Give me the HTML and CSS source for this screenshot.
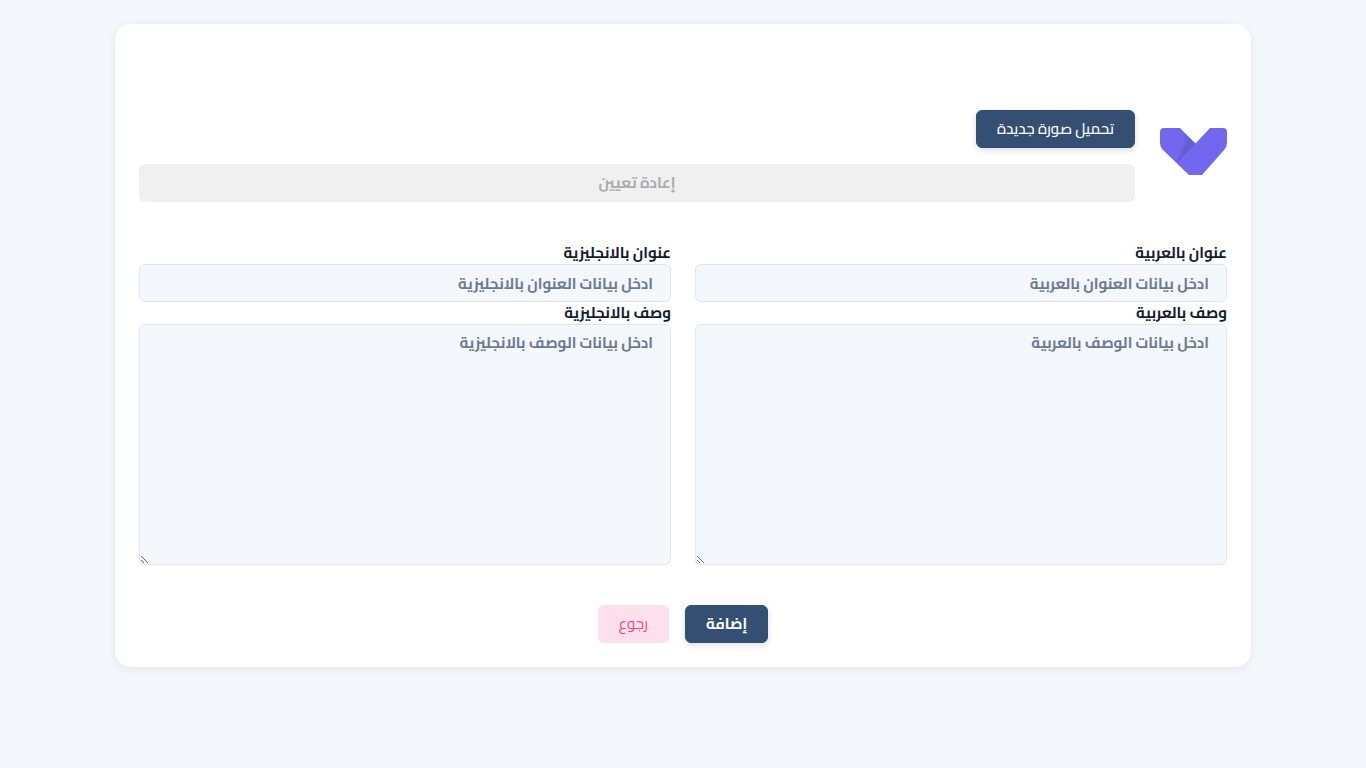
FILE: index.html
```
<!DOCTYPE html>
<html lang="ar" dir="rtl">
<head>
<meta charset="utf-8">
<meta name="viewport" content="width=device-width, initial-scale=1">
<title>إضافة</title>
<link rel="stylesheet" href="styles.css">
</head>
<body>
<main class="page">
  <form class="card">
    <section class="upload">
      <svg class="logo" viewBox="0 0 67 47" role="img" aria-label="الشعار">
        <path fill="#7367f0" d="M0 4Q0 0 4 0H20L35.500 15.500L50 0H63Q67 0 67 4V15Q67 19 64 22L42 47H29L3 22Q0 19 0 15Z"/>
        <path fill="#161616" fill-opacity=".07" d="M26 6L35.500 15.500L17 34.500Z"/>
        <path fill="#161616" fill-opacity=".06" d="M29.500 9.500L35.500 15.500L17 34.500Z"/>
      </svg>
      <div class="upload-actions">
        <button type="button" class="btn btn-primary">تحميل صورة جديدة</button>
        <button type="reset" class="btn btn-reset" disabled>إعادة تعيين</button>
      </div>
    </section>
    <section class="fields">
      <div class="field">
        <label for="title-ar">عنوان بالعربية</label>
        <input id="title-ar" type="text" placeholder="ادخل بيانات العنوان بالعربية">
      </div>
      <div class="field">
        <label for="title-en">عنوان بالانجليزية</label>
        <input id="title-en" type="text" placeholder="ادخل بيانات العنوان بالانجليزية">
      </div>
      <div class="field">
        <label for="desc-ar">وصف بالعربية</label>
        <textarea id="desc-ar" rows="10" placeholder="ادخل بيانات الوصف بالعربية"></textarea>
      </div>
      <div class="field">
        <label for="desc-en">وصف بالانجليزية</label>
        <textarea id="desc-en" rows="10" placeholder="ادخل بيانات الوصف بالانجليزية"></textarea>
      </div>
    </section>
    <div class="form-actions">
      <button type="submit" class="btn btn-primary btn-strong">إضافة</button>
      <button type="button" class="btn btn-back">رجوع</button>
    </div>
  </form>
</main>
</body>
</html>
```
FILE: styles.css
```
* {
  box-sizing: border-box;
}

body {
  margin: 0;
  background: #f4f7fc;
  color: #111c2d;
  font-family: Cairo, "DejaVu Sans", sans-serif;
  font-size: 15px;
  line-height: 22px;
}

.page {
  max-width: 1184px;
  margin: 0 auto;
  padding: 24px;
}

.card {
  padding: 24px;
  border-radius: 16px;
  background: #fff;
  box-shadow: 0 2px 10px rgba(40, 60, 70, 0.08);
}

.upload {
  display: flex;
  align-items: flex-start;
  gap: 25px;
  padding-top: 62px;
}

.logo {
  flex: none;
  width: 67px;
  height: 47px;
  margin-top: 18px;
}

.upload-actions {
  display: flex;
  flex: 1;
  flex-direction: column;
  align-items: flex-start;
  gap: 16px;
}

.btn {
  height: 38px;
  padding: 0 20px;
  border: 1px solid transparent;
  border-radius: 6px;
  font: inherit;
  cursor: pointer;
}

.btn-primary {
  border-color: #354f73;
  background: #354f73;
  color: #fff;
  font-weight: 500;
  box-shadow: 0 2px 6px rgba(20, 30, 60, 0.15);
}

.btn-strong {
  font-weight: 700;
}

.btn-reset {
  align-self: stretch;
  background: #f0f0f0;
  color: #aaacb0;
  font-weight: 700;
  cursor: default;
}

.btn-back {
  background: #fce1ec;
  color: #ea4886;
}

.fields {
  display: grid;
  grid-template-columns: 1fr 1fr;
  column-gap: 24px;
  margin-top: 40px;
}

.field {
  display: flex;
  flex-direction: column;
}

.field label {
  font-weight: 700;
}

.field input,
.field textarea {
  width: 100%;
  padding: 7px 17px;
  border: 1px solid #dfe6f0;
  border-radius: 6px;
  background: #f4f7fc;
  color: #111c2d;
  font: inherit;
  font-weight: 700;
}

.field input {
  height: 38px;
}

.field textarea {
  height: 241px;
  resize: both;
}

.field ::placeholder {
  color: #6c7a90;
  opacity: 1;
}

.form-actions {
  display: flex;
  justify-content: center;
  gap: 16px;
  margin-top: 40px;
}
```
